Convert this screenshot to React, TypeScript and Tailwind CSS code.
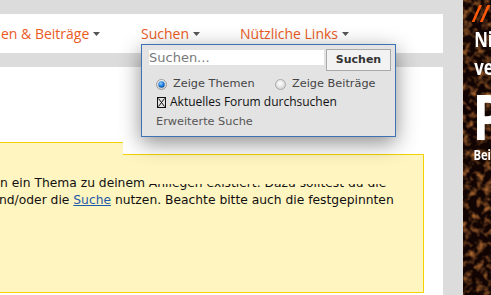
import React from "react";

const Caret = () => (
  <svg width="7" height="4" viewBox="0 0 7 4" className="ml-[4px] shrink-0">
    <polygon points="0,0 7,0 3.5,4" fill="#555" />
  </svg>
);

const RadioOn = () => (
  <svg width="11" height="11" viewBox="0 0 11 11" className="shrink-0">
    <defs>
      <radialGradient id="ron" cx="40%" cy="35%" r="70%">
        <stop offset="0%" stopColor="#8fd0ff" />
        <stop offset="60%" stopColor="#1877d6" />
        <stop offset="100%" stopColor="#0a4a9a" />
      </radialGradient>
      <linearGradient id="ring" x1="0" y1="0" x2="0" y2="1">
        <stop offset="0%" stopColor="#f4f4f4" />
        <stop offset="100%" stopColor="#d0d0d0" />
      </linearGradient>
    </defs>
    <circle cx="5.5" cy="5.5" r="5" fill="url(#ring)" stroke="#9a9a9a" strokeWidth="1" />
    <circle cx="5.5" cy="5.5" r="3.2" fill="url(#ron)" />
  </svg>
);

const RadioOff = () => (
  <svg width="11" height="11" viewBox="0 0 11 11" className="shrink-0">
    <defs>
      <radialGradient id="roff" cx="45%" cy="40%" r="65%">
        <stop offset="0%" stopColor="#ffffff" />
        <stop offset="100%" stopColor="#cfcfcf" />
      </radialGradient>
    </defs>
    <circle cx="5.5" cy="5.5" r="5" fill="url(#roff)" stroke="#a8a8a8" strokeWidth="1" />
  </svg>
);

const BoxX = () => (
  <svg width="9" height="11" viewBox="0 0 9 11" className="shrink-0">
    <rect x="0.5" y="0.5" width="8" height="10" fill="none" stroke="#111" strokeWidth="1" />
    <line x1="1.5" y1="1.5" x2="7.5" y2="9.5" stroke="#111" strokeWidth="1" />
    <line x1="7.5" y1="1.5" x2="1.5" y2="9.5" stroke="#111" strokeWidth="1" />
  </svg>
);

const Noise = () => (
  <svg className="absolute inset-0" width="28" height="295" viewBox="0 0 28 295">
    <defs>
      <filter id="nz" x="0" y="0" width="100%" height="100%">
        <feTurbulence type="fractalNoise" baseFrequency="0.14" numOctaves="2" seed="7" />
        <feColorMatrix
          type="matrix"
          values="0 0 0 0 0.42  0 0 0 0 0.14  0 0 0 0 0.03  2.4 0 0 0 -1.05"
        />
      </filter>
    </defs>
    <rect width="28" height="295" fill="#120402" />
    <rect width="28" height="295" filter="url(#nz)" />
  </svg>
);

export default function App() {
  const dv = { fontFamily: '"DejaVu Sans", Verdana, sans-serif' };
  const os = { fontFamily: '"Open Sans", "Noto Sans", sans-serif' };
  return (
    <div className="flex h-[295px] w-[491px] overflow-hidden bg-[#dcdcdc]">
      {/* main column */}
      <div className="flex w-[443px] shrink-0 flex-col pt-[14px]">
        {/* nav bar */}
        <div className="relative z-20 flex h-[39px] items-center bg-white text-[14px] leading-[20px] text-[#ea5a1e]" style={os}>
          <div className="flex w-[141px] shrink-0 items-center whitespace-nowrap pl-[1px]">
            <span>en &amp; Beiträge</span>
            <Caret />
          </div>
          <div className="relative flex h-full w-[99px] shrink-0 items-center whitespace-nowrap">
            <span>Suchen</span>
            <Caret />
            {/* dropdown */}
            <div className="absolute left-0 top-[30px] z-30 flex w-[255px] flex-col border border-[#3d72b4] bg-[#e3e3e3] pb-[6px] pl-[6px] pr-[4px] pt-[4px] shadow-[0_6px_20px_rgba(0,0,0,0.45)]" style={dv}>
              <div className="flex items-start">
                <input
                  type="text"
                  placeholder="Suchen..."
                  className="h-[17px] w-[177px] border border-[#e2e2e2] bg-white px-0 text-[13px] leading-[15px] text-[#333] outline-none placeholder:text-[#7a7a7a]"
                  style={dv}
                />
                <button
                  className="ml-[1px] flex h-[22px] w-[65px] items-center justify-center border border-[#a9a9a9] bg-[#f3f3f3] text-[11px] font-bold text-[#333]"
                  style={dv}
                >
                  Suchen
                </button>
              </div>
              <div className="mt-[5px] flex h-[16px] items-center text-[11.3px] leading-[16px] text-[#454545]">
                <div className="ml-[8px] flex w-[119px] items-center">
                  <RadioOn />
                  <span className="ml-[6px] whitespace-nowrap">Zeige Themen</span>
                </div>
                <RadioOff />
                <span className="ml-[6px] whitespace-nowrap">Zeige Beiträge</span>
              </div>
              <div className="mt-[2px] flex h-[16px] items-center text-[12px] leading-[16px] text-[#111]" style={os}>
                <div className="ml-[9px]">
                  <BoxX />
                </div>
                <span className="ml-[4px] whitespace-nowrap">Aktuelles Forum durchsuchen</span>
              </div>
              <div className="ml-[8px] mt-[4px] h-[16px] whitespace-nowrap text-[11.3px] leading-[16px] text-[#555]">
                Erweiterte Suche
              </div>
            </div>
          </div>
          <div className="flex items-center whitespace-nowrap">
            <span>Nützliche Links</span>
            <Caret />
          </div>
        </div>
        {/* stripe */}
        <div className="h-[14px] shrink-0 bg-[#dcdcdc]" />
        {/* content */}
        <div className="relative flex-1 bg-white">
          <div
            className="ml-[-10px] mt-[75px] h-[151px] w-[434px] border border-[#f2d200] bg-[#fff5c0] pt-[32px] text-[12.3px] leading-[17px] text-[#111]"
            style={dv}
          >
            <div className="ml-[9px] whitespace-nowrap">n ein Thema zu deinem Anliegen existiert. Dazu solltest du die</div>
            <div className="ml-[8px] whitespace-nowrap">
              nd/oder die <span className="text-[#1f5ba8] underline">Suche</span> nutzen. Beachte bitte auch die festgepinnten
            </div>
          </div>
          {/* repaint artifacts */}
          <div className="absolute left-[123px] top-[75px] z-10 h-[13px] w-[301px] border-b border-[#f2d200] bg-white" />
          <div className="absolute left-[147px] top-[107px] z-10 h-[10px] w-[255px] bg-[#fff5c0]" />
        </div>
      </div>
      {/* side banner */}
      <div className="relative ml-[20px] h-[295px] w-[28px] shrink-0 overflow-hidden">
        <Noise />
        <div className="relative flex origin-left scale-x-[0.8] flex-col whitespace-nowrap font-bold text-white" style={os}>
          <div className="mt-[2px] h-[22px] pl-[12px] text-[24px] italic leading-[22px] text-[#ff5a0a]">//</div>
          <div className="mt-[5px] h-[21px] pl-[14px] text-[21px] leading-[21px]">Nicht</div>
          <div className="mt-[7px] h-[21px] pl-[14px] text-[21px] leading-[21px]">verpassen</div>
          <div className="mt-[6px] h-[63px] pl-[12px] text-[63px] leading-[63px]">P</div>
          <div className="mt-[1px] h-[14px] pl-[13px] text-[14px] leading-[14px]">Beitrag</div>
        </div>
      </div>
    </div>
  );
}
